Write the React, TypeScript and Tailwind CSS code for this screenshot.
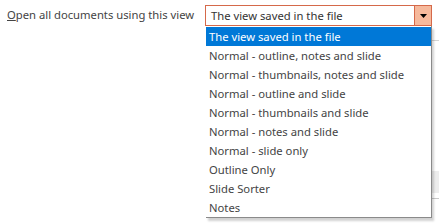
const options = [
  "The view saved in the file",
  "Normal - outline, notes and slide",
  "Normal - thumbnails, notes and slide",
  "Normal - outline and slide",
  "Normal - thumbnails and slide",
  "Normal - notes and slide",
  "Normal - slide only",
  "Outline Only",
  "Slide Sorter",
  "Notes",
];

const App = () => {
  return (
    <div className="flex w-[439px] h-[224px] bg-white overflow-hidden text-[11.25px] text-[#444] font-['Segoe_UI','Noto_Sans',sans-serif]">
      <div className="flex items-start pt-[5px] pl-[7px] w-[432px]">
        <div className="w-[198px] whitespace-nowrap leading-[20px]">
          <span className="underline">O</span>pen all documents using this view
        </div>
        <div className="relative z-10">
          <div className="flex w-[227px] h-[21px] border border-[#d5694a]">
            <div className="flex-1 pl-[5px] leading-[19px] text-[#333]">The view saved in the file</div>
            <div className="w-[17px] bg-[#f6b99c] border-l border-[#d5694a] flex items-center justify-center">
              <svg width="7" height="4" viewBox="0 0 7 4">
                <path d="M0 0H7L3.5 4Z" fill="#000" />
              </svg>
            </div>
          </div>
          <div className="absolute left-[1px] top-[21px] w-[226px] bg-white border-r border-b border-[#8a8a8a] shadow-[2px_3px_2px_rgba(0,0,0,0.18)] pt-px">
            {options.map((o, i) => (
              <div
                key={o}
                className={
                  i === 0
                    ? "h-[19px] leading-[19px] pl-[3px] bg-[#0078d7] text-white"
                    : "h-[19px] leading-[19px] pl-[3px]"
                }
              >
                {o}
              </div>
            ))}
          </div>
        </div>
      </div>
      {/* edge of the dialog behind the open list */}
      <div className="flex flex-col w-[7px] pt-[40px]">
        <div className="h-px bg-[#d4d4d4]" />
        <div className="h-[130px]" />
        <div className="h-[22px] bg-[#ededed]" />
        <div className="h-[5px]" />
        <div className="h-px bg-[#c8c8c8]" />
      </div>
    </div>
  );
};

export default App;
